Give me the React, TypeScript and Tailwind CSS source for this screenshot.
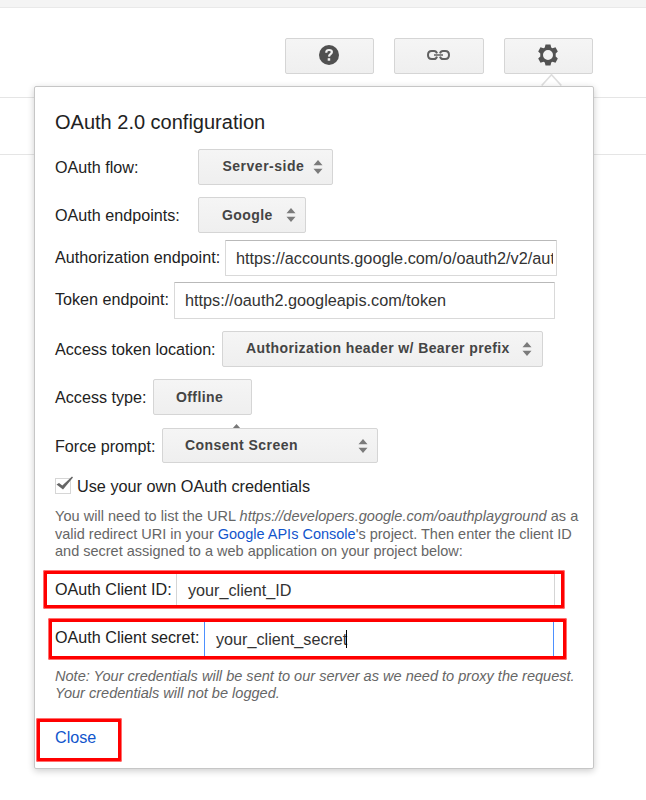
import React from "react";

const BUTTON =
  "flex shrink-0 rounded-[2px] border border-[#d5d5d5] bg-linear-to-b from-[#f5f5f5] to-[#efefef]";

function Sorter({ className = "" }: { className?: string }) {
  return (
    <svg className={"shrink-0 " + className} width="10" height="14" viewBox="0 0 10 14" fill="#7b7b7b">
      <path d="M5 0 9.500 5.200H.5zM5 14 9.500 8.800H.5z" />
    </svg>
  );
}

function Row({ className, label, labelClass, children }: {
  className: string;
  label: string;
  labelClass: string;
  children: React.ReactNode;
}) {
  return (
    <div className={"flex items-start " + className}>
      <label className={"shrink-0 text-[16.150px] leading-[20px] " + labelClass}>{label}</label>
      {children}
    </div>
  );
}

export default function App() {
  return (
    <div className="relative h-[800px] w-[646px] overflow-hidden bg-white font-['Liberation_Sans',Arial,sans-serif] text-[#222] whitespace-nowrap">
      <div className="h-[8px] border-b border-[#e9e9e9] bg-[#f4f4f4]" />
      <header className="flex h-[90px] items-start border-b border-[#e5e5e5] pt-[30px] pl-[285px]">
        <button className={BUTTON + " h-9 w-[89px] items-center justify-center"}>
          <svg className="-mt-[2px] mr-[2px]" width="20" height="20" viewBox="0 0 20 20">
            <circle cx="10" cy="10" r="10" fill="#505050" />
            <path d="M7.300 7.800V7C7.400 5.400 8.400 5 10 5c1.900 0 2.900.7 2.900 2 0 2.200-2.800 2.100-2.900 4.600" fill="none" stroke="#f1f1f1" strokeWidth="2.200" />
            <path d="M8.700 13.200h2.500v2.500H8.700z" fill="#f1f1f1" />
          </svg>
        </button>
        <button className={BUTTON + " ml-5 h-9 w-[90px] items-center justify-center"}>
          <svg className="-mt-[2px] mr-px" width="23" height="10" viewBox="0 0 23 10" fill="none" stroke="#606060" strokeWidth="2">
            <path d="M10 3.400C9.500 1.800 8.600 1 7.200 1H4.800C2.500 1 1 2.600 1 5s1.500 4 3.800 4h2.400c1.400 0 2.300-.8 2.800-2.400M13 3.400C13.500 1.800 14.400 1 15.800 1h2.400C20.500 1 22 2.600 22 5s-1.500 4-3.800 4h-2.400c-1.400 0-2.300-.8-2.800-2.400" />
            <path d="M7 5h9" stroke="#858585" />
          </svg>
        </button>
        <button className={BUTTON + " ml-5 h-9 w-[89px] items-center justify-center"}>
          <svg className="-mt-[2px] mr-[2px]" width="20" height="22" viewBox="0 0 20 22">
            <path fill="#525252" fillRule="evenodd" d="M7.500.4h5l.7 3 1.300.8 3-.9 2.300 4.100-2.100 2.200v2.800l2.100 2.200-2.300 4.100-3-.9-1.300.8-.7 3h-5l-.7-3-1.300-.8-3 .9-2.300-4.100 2.100-2.200V9.600L.2 7.400l2.300-4.100 3 .9 1.300-.8zM10 6a5 5 0 1 0 0 10 5 5 0 0 0 0-10z" />
          </svg>
        </button>
      </header>
      <div className="h-[57px] border-b border-[#e5e5e5]" />

      <svg className="absolute top-[73px] left-[541px]" width="22" height="14" viewBox="0 0 22 14">
        <path d="M.7 12.500 10.500 1.700 20.300 12.500V14H.7z" fill="#fff" />
        <path d="M.7 12.500 10.500 1.700 20.300 12.500" fill="none" stroke="#dedede" strokeWidth="1.700" />
      </svg>

      <section className="absolute top-[86px] left-[34px] h-[683px] w-[560px] rounded-[2px] border border-[#c6c6c6] bg-white pl-5 shadow-[0_2px_7px_rgba(0,0,0,0.2)]">
        <h1 className="h-[62px] pt-[23px] text-[20px] leading-[24px]">OAuth 2.0 configuration</h1>

        <Row className="h-12" label="OAuth flow:" labelClass="w-[143px] pt-[8px]">
          <button className={BUTTON + " h-9 w-[135px] pl-[23.500px] text-[14px] font-bold leading-[33px] tracking-[.5px] text-[#444]"}>
            <span className="w-[90.500px] text-left">Server-side</span><Sorter className="mt-[10px]" />
          </button>
        </Row>
        <Row className="h-[43px]" label="OAuth endpoints:" labelClass="w-[143px] pt-[8px]">
          <button className={BUTTON + " h-9 w-[108px] pl-[23px] text-[14px] font-bold leading-[34px] tracking-[.4px] text-[#444]"}>
            <span className="w-[64px] text-left">Google</span><Sorter className="mt-[10px]" />
          </button>
        </Row>
        <Row className="h-[42px]" label="Authorization endpoint:" labelClass="w-[170px] pt-[7px]">
          <div className="h-9 w-[332px] rounded-[1px] border border-[#d9d9d9] border-t-[#b9b9b9] px-[2px] pl-[10px]">
            <div className="w-[317px] overflow-hidden text-[16.250px] leading-[34px] text-[#333]">https://accounts.google.com/o/oauth2/v2/aut</div>
          </div>
        </Row>
        <Row className="h-[49px]" label="Token endpoint:" labelClass="w-[119px] pt-[7px]">
          <div className="h-[37px] w-[381px] rounded-[1px] border border-[#d9d9d9] border-t-[#b9b9b9] pl-[10px] text-[16.250px] leading-[35px] text-[#333]">
            https://oauth2.googleapis.com/token
          </div>
        </Row>
        <Row className="h-12" label="Access token location:" labelClass="w-[167px] pt-[8px]">
          <button className={BUTTON + " h-9 w-[321px] pl-[23px] text-[14px] font-bold leading-[33px] tracking-[.4px] text-[#444]"}>
            <span className="w-[276px] text-left">Authorization header w/ Bearer prefix</span><Sorter className="mt-[10px]" />
          </button>
        </Row>
        <Row className="h-[49px]" label="Access type:" labelClass="w-[98px] pt-[8px]">
          <button className={BUTTON + " h-9 w-[99px] pl-[22px] text-[14px] font-bold leading-[34px] tracking-[.4px] text-[#444]"}>
            Offline
          </button>
          <svg className="-ml-[20px] mt-[45px]" width="9" height="5" viewBox="0 0 9 5" fill="#777"><path d="M4.500 0 9 5H0z" /></svg>
        </Row>
        <Row className="h-[50px]" label="Force prompt:" labelClass="w-[107px] pt-[8px]">
          <button className={BUTTON + " h-[35px] w-[216px] pl-[22px] text-[14px] font-bold leading-[33px] tracking-[.45px] text-[#444]"}>
            <span className="w-[173px] text-left">Consent Screen</span><Sorter className="mt-[10px]" />
          </button>
        </Row>

        <div className="flex h-[30px] items-start">
          <svg width="18" height="18" viewBox="0 0 18 18" className="-mt-1 mr-1 shrink-0 overflow-visible">
            <rect x=".5" y="4.500" width="15" height="15" fill="#fff" stroke="#d6d6d6" />
            <path d="M1.500 10.500 4 9 7.300 11.500 17 2.500 18 3.500 8 15.500z" fill="#666" />
          </svg>
          <span className="-mt-[2px] text-[16.250px] leading-[20px]">Use your own OAuth credentials</span>
        </div>
        <p className="h-[65px] text-[14.500px] leading-[17.500px] text-[#666]">
          <span className="tracking-[.035px]">You will need to list the URL <i>https://developers.google.com/oauthplayground</i> as a</span><br />
          valid redirect URI in your <a className="text-[#15c]">Google APIs Console</a>'s project. Then enter the client ID<br />
          and secret assigned to a web application on your project below:
        </p>
        <Row className="h-12" label="OAuth Client ID:" labelClass="w-[121px] pt-[6px]">
          <div className="h-9 w-[379px] border-x border-[#d5d5d5] pl-[11px] text-[16.200px] leading-[35px] text-[#333]">your_client_ID</div>
        </Row>
        <Row className="h-[46px]" label="OAuth Client secret:" labelClass="w-[149px] pt-[6px]">
          <div className="flex h-9 w-[350px] border-x border-[#4d90fe] pl-[11px] text-[16.200px] leading-[37px] text-[#333]">
            <span>your_client_secret</span><span className="-ml-px mt-[9px] h-[18px] w-px bg-black" />
          </div>
        </Row>
        <p className="h-[60px] pt-px text-[14.560px] leading-[17px] text-[#666] italic">
          Note: Your credentials will be sent to our server as we need to proxy the request.<br />
          Your credentials will not be logged.
        </p>
        <a className="relative -top-px text-[16.150px] leading-[20px] text-[#15c]">Close</a>
      </section>

      <div className="absolute top-[570px] left-[43px] h-[39px] w-[522px] rounded-[2px] border-4 border-[#f00] outline-1 -outline-offset-1 outline-[#ff7070]" />
      <div className="absolute top-[618px] left-[48px] h-[42px] w-[519px] rounded-[2px] border-4 border-[#f00] outline-1 -outline-offset-1 outline-[#ff7070]" />
      <div className="absolute top-[718px] left-[36px] h-[44px] w-[86px] rounded-[2px] border-4 border-[#f00] outline-1 -outline-offset-1 outline-[#ff7070]" />
    </div>
  );
}
